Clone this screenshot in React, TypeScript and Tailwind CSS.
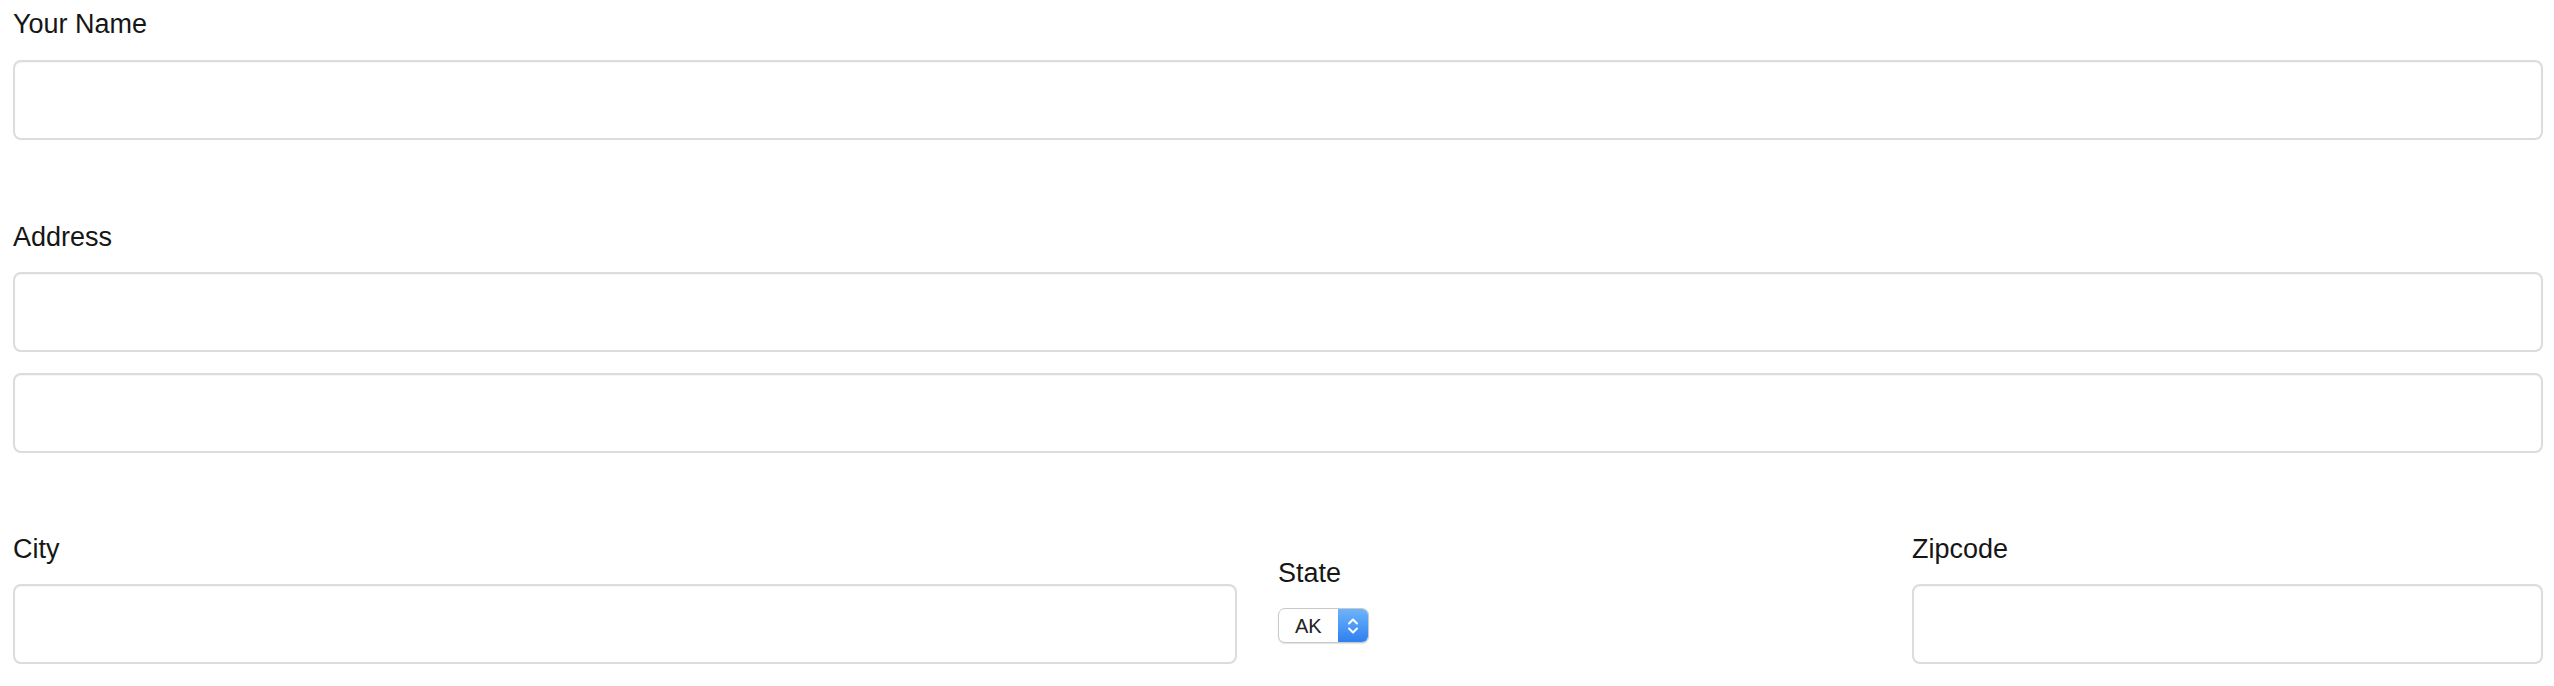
import React from 'react';

const Field: React.FC<{ className?: string }> = ({ className = '' }) => (
  <input
    type="text"
    className={`block w-full h-[80px] rounded-[8px] border-2 border-[#dcdcdc] bg-white shadow-[inset_0_1px_1px_rgba(0,0,0,0.04)] outline-none ${className}`}
  />
);

const Label: React.FC<{ children: React.ReactNode; className?: string }> = ({ children, className = '' }) => (
  <label className={`block text-[27px] leading-[30px] text-[#161616] ${className}`}>{children}</label>
);

const StateSelect: React.FC = () => (
  <div className="flex w-[91px] h-[35px] rounded-[7px] border border-[#c9c9c9] bg-white shadow-[0_1px_1px_rgba(0,0,0,0.12)] overflow-hidden">
    <div className="flex-1 flex items-center pl-[16px] text-[20px] font-medium text-[#222]">AK</div>
    <div className="w-[30px] flex items-center justify-center bg-gradient-to-b from-[#6db4fb] to-[#2e7ff0]">
      <svg width="12" height="20" viewBox="0 0 12 20" fill="none" stroke="white" strokeWidth="2" strokeLinecap="round" strokeLinejoin="round">
        <path d="M2 7.5 L6 3.5 L10 7.5" />
        <path d="M2 12.5 L6 16.5 L10 12.5" />
      </svg>
    </div>
  </div>
);

export default function App() {
  return (
    <div className="w-full h-[686px] bg-white pl-[13px] pr-[11px] pt-[9px]" style={{ fontFamily: '"Liberation Sans", Arial, sans-serif' }}>
      <Label>Your Name</Label>
      <Field className="mt-[21px]" />

      <Label className="mt-[82px]">Address</Label>
      <Field className="mt-[20px]" />
      <Field className="mt-[21px]" />

      <div className="flex mt-[81px]">
        <div className="w-[1224px]">
          <Label>City</Label>
          <Field className="mt-[20px]" />
        </div>
        <div className="w-[634px] ml-[41px] pt-[24px]">
          <Label>State</Label>
          <div className="mt-[20px]">
            <StateSelect />
          </div>
        </div>
        <div className="flex-1">
          <Label>Zipcode</Label>
          <Field className="mt-[20px]" />
        </div>
      </div>
    </div>
  );
}
